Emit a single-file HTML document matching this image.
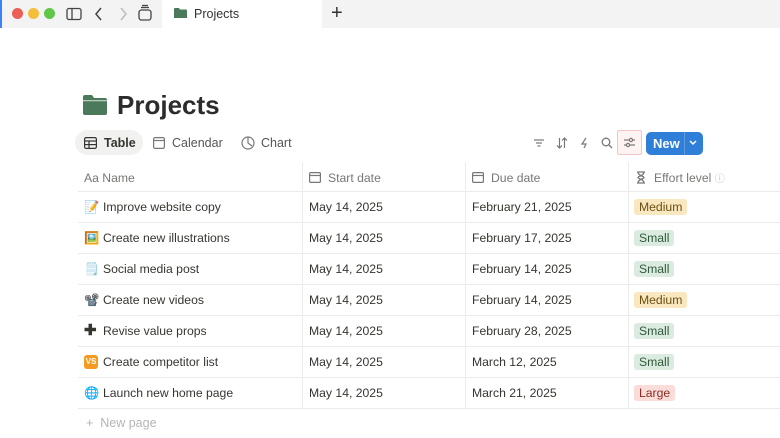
<!DOCTYPE html>
<html><head><style>
body{margin:0;width:780px;height:438px;overflow:hidden;background:#fff;font-family:"Liberation Sans",sans-serif;color:#37352f;position:relative}
.abs{position:absolute}
.tabbar{left:0;top:0;width:780px;height:28px;background:#f3f3f3;border-left:2px solid #3b82f6;box-sizing:border-box}
.dot{width:11px;height:11px;border-radius:50%;top:8px}
.row{position:absolute;left:78px;width:702px;height:30px;border-bottom:1px solid #ebebea;font-size:12.2px}
.row div{position:absolute;top:8px}
.pill{padding:1px 5px;border-radius:3px;font-size:12.2px;top:7px!important}
.vl{position:absolute;top:162px;height:247px;width:1px;background:#ebebea}
.hd{position:absolute;top:171px;font-size:12.2px;color:#787774;line-height:14px}
</style></head><body>
<div class="abs tabbar"></div>
<div class="abs" style="left:162px;top:0;width:160px;height:28px;background:#fff"></div>
<div class="abs dot" style="left:12px;background:#ec5f57"></div>
<div class="abs dot" style="left:28px;background:#f4bd3b"></div>
<div class="abs dot" style="left:44px;background:#5ec747"></div>
<svg class="abs" style="left:66px;top:6px" width="16" height="16" viewBox="0 0 16 16" fill="none" stroke="#444" stroke-width="1.3"><rect x="1" y="2.5" width="14" height="11" rx="2"/><line x1="6" y1="2.5" x2="6" y2="13.5"/></svg>
<svg class="abs" style="left:93px;top:6px" width="12" height="16" viewBox="0 0 12 16" fill="none" stroke="#444" stroke-width="1.5"><path d="M8 2L3 8l5 6"/></svg>
<svg class="abs" style="left:117px;top:6px" width="12" height="16" viewBox="0 0 12 16" fill="none" stroke="#bbb" stroke-width="1.5"><path d="M4 2l5 6-5 6"/></svg>
<svg class="abs" style="left:137px;top:4px" width="16" height="18" viewBox="0 0 16 18" fill="none" stroke="#444" stroke-width="1.3"><rect x="2" y="6" width="12" height="10" rx="2.5"/><line x1="4" y1="3.5" x2="12" y2="3.5"/><line x1="5" y1="1.5" x2="11" y2="1.5"/></svg>
<svg class="abs" style="left:174px;top:7px" width="13" height="12" viewBox="0 0 13 12"><path d="M0 2a1 1 0 0 1 1-1h4l1 1.5h6a1 1 0 0 1 1 1V11H0z" fill="#4b7a5a"/></svg>
<div class="abs" style="left:194px;top:7px;font-size:12.5px;color:#333">Projects</div>
<div class="abs" style="left:331px;top:2px;font-size:20px;color:#333">+</div>

<svg class="abs" style="left:83px;top:94px" width="24" height="21" viewBox="0 0 24 21"><path d="M0 3a2 2 0 0 1 2-2h7l2 3h11a2 2 0 0 1 2 2v13a2 2 0 0 1-2 2H2a2 2 0 0 1-2-2z" fill="#4b7a5a"/><rect x="0" y="6" width="24" height="1.3" fill="#fff" opacity=".6"/></svg>
<div class="abs" style="left:117px;top:90px;font-size:26px;font-weight:bold;color:#2c2c2b">Projects</div>

<div class="abs" style="left:75px;top:130px;width:68px;height:25px;border-radius:13px;background:#f1f1ef"></div>
<svg class="abs" style="left:84px;top:137px" width="13" height="12" viewBox="0 0 13 12" fill="none" stroke="#37352f" stroke-width="1.2"><rect x=".6" y=".6" width="11.8" height="10.8" rx="1.5"/><line x1=".6" y1="4" x2="12.4" y2="4"/><line x1=".6" y1="7.6" x2="12.4" y2="7.6"/><line x1="5" y1="4" x2="5" y2="11.4"/></svg>
<div class="abs" style="left:104px;top:136px;font-size:12.5px;font-weight:bold">Table</div>
<svg class="abs" style="left:153px;top:137px" width="12" height="12" viewBox="0 0 12 12" fill="none" stroke="#787774" stroke-width="1.2"><rect x=".6" y=".6" width="10.8" height="10.8" rx="1.5"/><line x1=".6" y1="3.5" x2="11.4" y2="3.5"/></svg>
<div class="abs" style="left:172px;top:136px;font-size:12.5px;color:#555">Calendar</div>
<svg class="abs" style="left:241px;top:136px" width="14" height="14" viewBox="0 0 14 14" fill="none" stroke="#787774" stroke-width="1.2"><circle cx="7" cy="7" r="6"/><path d="M7 1v6l4 3"/></svg>
<div class="abs" style="left:261px;top:136px;font-size:12.5px;color:#555">Chart</div>

<svg class="abs" style="left:533px;top:138px" width="12" height="10" viewBox="0 0 12 10" stroke="#787774" stroke-width="1.2"><line x1="1" y1="2" x2="11" y2="2"/><line x1="3" y1="5" x2="9" y2="5"/><line x1="4.5" y1="8" x2="7.5" y2="8"/></svg>
<svg class="abs" style="left:556px;top:137px" width="12" height="12" viewBox="0 0 12 12" fill="none" stroke="#787774" stroke-width="1.2"><path d="M3.5 1v10M1 8.5l2.5 2.5 2.5-2.5M8.5 11V1M6 3.5L8.5 1 11 3.5"/></svg>
<svg class="abs" style="left:580px;top:137px" width="10" height="12" viewBox="0 0 10 12" fill="none" stroke="#787774" stroke-width="1.2"><path d="M6 1L2 7h4l-2 4"/></svg>
<svg class="abs" style="left:601px;top:137px" width="12" height="12" viewBox="0 0 12 12" fill="none" stroke="#787774" stroke-width="1.3"><circle cx="5" cy="5" r="3.8"/><line x1="8" y1="8" x2="11" y2="11"/></svg>
<div class="abs" style="left:617px;top:130px;width:25px;height:25px;border:1px solid #f3c5c5;background:#fdf3f3;box-sizing:border-box;border-radius:2px"></div>
<svg class="abs" style="left:623px;top:137px" width="13" height="11" viewBox="0 0 13 11" fill="none" stroke="#787774" stroke-width="1.2"><line x1="1" y1="3" x2="12" y2="3"/><line x1="1" y1="8" x2="12" y2="8"/><circle cx="8" cy="3" r="1.6" fill="#fdf3f3"/><circle cx="5" cy="8" r="1.6" fill="#fdf3f3"/></svg>
<div class="abs" style="left:646px;top:132px;width:57px;height:23px;background:#2f7fd8;border-radius:5px"></div>
<div class="abs" style="left:653px;top:136px;font-size:13px;font-weight:bold;color:#fff">New</div>
<div class="abs" style="left:684px;top:132px;width:1px;height:23px;background:#5d9ae0"></div>
<svg class="abs" style="left:688px;top:139px" width="10" height="8" viewBox="0 0 10 8" fill="none" stroke="#fff" stroke-width="1.5"><path d="M2 2l3 3 3-3"/></svg>

<div class="abs" style="left:78px;top:191px;width:702px;height:1px;background:#ebebea"></div>
<div class="hd" style="left:84px">Aa&nbsp;Name</div>
<svg class="abs" style="left:309px;top:171px" width="12" height="12" viewBox="0 0 12 12" fill="none" stroke="#787774" stroke-width="1.2"><rect x=".6" y="1.6" width="10.8" height="9.8" rx="1"/><line x1=".6" y1="4.5" x2="11.4" y2="4.5"/></svg>
<div class="hd" style="left:328px">Start date</div>
<svg class="abs" style="left:472px;top:171px" width="12" height="12" viewBox="0 0 12 12" fill="none" stroke="#787774" stroke-width="1.2"><rect x=".6" y="1.6" width="10.8" height="9.8" rx="1"/><line x1=".6" y1="4.5" x2="11.4" y2="4.5"/></svg>
<div class="hd" style="left:491px">Due date</div>
<svg class="abs" style="left:636px;top:171px" width="10" height="13" viewBox="0 0 10 13" fill="none" stroke="#787774" stroke-width="1.3"><path d="M1 1h8M1 12h8M2 1c0 4 6 4 6 5.5S2 8 2 12M8 1c0 4-6 4-6 5.5S8 8 8 12"/></svg>
<div class="hd" style="left:654px">Effort level <span style="color:#bbb;font-size:10px">ⓘ</span></div>
<div class="vl" style="left:302px"></div><div class="vl" style="left:465px"></div><div class="vl" style="left:628px"></div>

<div class="row" style="top:192px"><div style="left:6px">📝</div><div style="left:25px">Improve website copy</div><div style="left:231px">May 14, 2025</div><div style="left:394px">February 21, 2025</div><div class="pill" style="left:556px;background:#f9e8bf;color:#6b4f14">Medium</div></div>
<div class="row" style="top:223px"><div style="left:6px">🖼️</div><div style="left:25px">Create new illustrations</div><div style="left:231px">May 14, 2025</div><div style="left:394px">February 17, 2025</div><div class="pill" style="left:556px;background:#dcebdf;color:#2f5a3c">Small</div></div>
<div class="row" style="top:254px"><div style="left:6px">🗒️</div><div style="left:25px">Social media post</div><div style="left:231px">May 14, 2025</div><div style="left:394px">February 14, 2025</div><div class="pill" style="left:556px;background:#dcebdf;color:#2f5a3c">Small</div></div>
<div class="row" style="top:285px"><div style="left:6px">📽️</div><div style="left:25px">Create new videos</div><div style="left:231px">May 14, 2025</div><div style="left:394px">February 14, 2025</div><div class="pill" style="left:556px;background:#f9e8bf;color:#6b4f14">Medium</div></div>
<div class="row" style="top:316px"><div style="left:6px;font-weight:bold;font-size:15px;top:5px">✚</div><div style="left:25px">Revise value props</div><div style="left:231px">May 14, 2025</div><div style="left:394px">February 28, 2025</div><div class="pill" style="left:556px;background:#dcebdf;color:#2f5a3c">Small</div></div>
<div class="row" style="top:347px"><div style="left:6px;top:8px;width:14px;height:14px;background:#f59a1e;border-radius:3px;color:#fff;font-size:8px;font-weight:bold;text-align:center;line-height:14px">VS</div><div style="left:25px">Create competitor list</div><div style="left:231px">May 14, 2025</div><div style="left:394px">March 12, 2025</div><div class="pill" style="left:556px;background:#dcebdf;color:#2f5a3c">Small</div></div>
<div class="row" style="top:378px"><div style="left:6px">🌐</div><div style="left:25px">Launch new home page</div><div style="left:231px">May 14, 2025</div><div style="left:394px">March 21, 2025</div><div class="pill" style="left:556px;background:#fadcd8;color:#8a2e25">Large</div></div>
<div class="abs" style="left:86px;top:416px;font-size:12.5px;color:#b5b4b0">+&nbsp;&nbsp;New page</div>
</body></html>
